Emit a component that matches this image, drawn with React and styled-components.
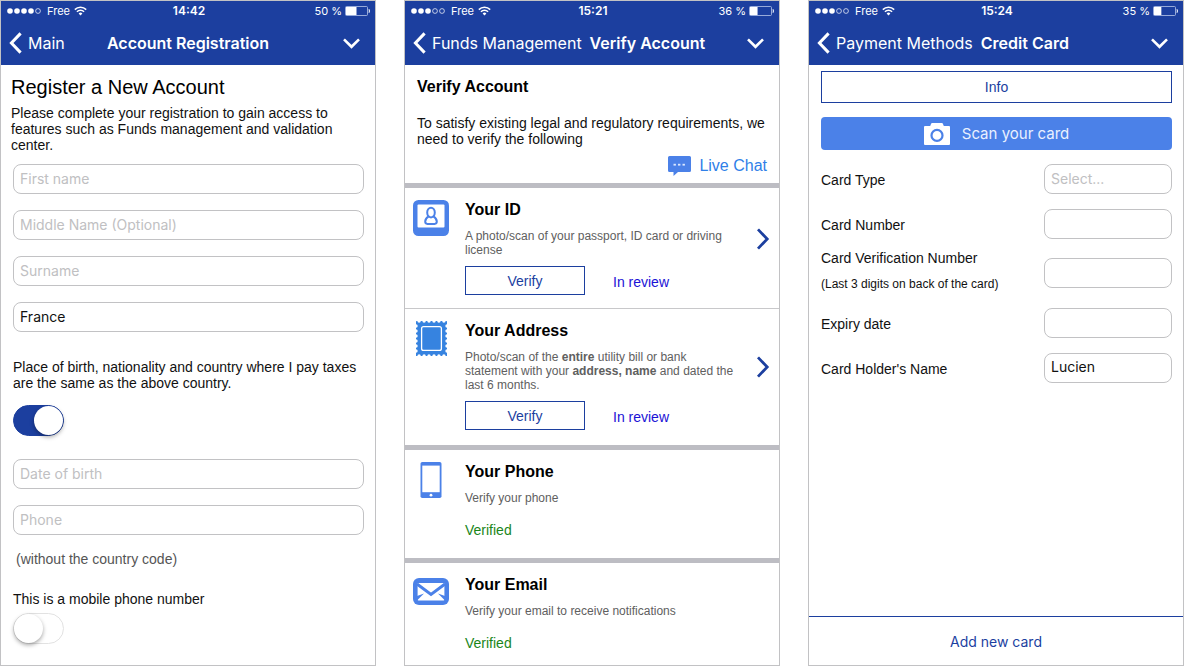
import React, { useState } from "react";
import styled, { createGlobalStyle } from "styled-components";

const navy = "#1c3f9f";
const blue = "#4b81e8";
const line = "#c2c2c4";
const ui = `Inter, "Liberation Sans", sans-serif`;
const body = `"Liberation Sans", Arial, sans-serif`;

const GlobalStyle = createGlobalStyle`
  *, *::before, *::after { box-sizing: border-box; }
  body { margin: 0; background: #fff; color: #111; font-family: ${body}; font-size: 14px; line-height: 16px; }
  h1, h2, p { margin: 0; }
  button, input, select { font: inherit; }
`;

const Page = styled.main`
  display: grid;
  grid-template-columns: repeat(3, minmax(0, 1fr));
  gap: 28px;
  min-height: 100vh;
  padding-bottom: 1px;
`;

const Phone = styled.section`
  display: flex;
  flex-direction: column;
  border: 1px solid ${line};
`;

const Header = styled.header`
  background: ${navy};
  color: #fff;
  font-family: ${ui};
`;

const StatusBar = styled.div`
  display: grid;
  grid-template-columns: 1fr auto 1fr;
  align-items: center;
  height: 20px;
  padding: 0 4px 0 6px;
  font-size: 11px;
`;

const Carrier = styled.div`
  display: flex;
  align-items: center;
  gap: 4px;
`;

const Clock = styled.span`
  font-size: 12px;
  font-weight: 600;
`;

const Power = styled.div`
  display: flex;
  align-items: center;
  justify-content: flex-end;
  gap: 3px;
`;

const NavBar = styled.div`
  display: grid;
  grid-template-columns: 1fr auto 1fr;
  column-gap: 8px;
  align-items: center;
  height: 44px;
  font-size: 16px;
  white-space: nowrap;
`;

const Back = styled.button`
  display: flex;
  align-items: center;
  gap: 6px;
  padding: 0 0 0 8px;
  border: 0;
  background: none;
  color: inherit;
`;

const ScreenTitle = styled.span`
  font-weight: 600;
`;

const MenuToggle = styled.button`
  display: flex;
  justify-self: end;
  padding: 0 15px 0 0;
  border: 0;
  background: none;
  color: inherit;
`;

const Intro = styled.div`
  padding: 10px 10px 0;
`;

const Heading = styled.h1`
  font-size: 20px;
  font-weight: 400;
  line-height: 24px;
  margin-bottom: 6px;
  color: #000;
`;

const Form = styled.form`
  display: flex;
  flex-direction: column;
  padding: 11px 11px 20px 12px;
`;

const FieldGroup = styled.div`
  display: flex;
  flex-direction: column;
  gap: 16px;
`;

const fieldStyle = `
  width: 100%;
  height: 30px;
  padding: 0 6px;
  border: 1px solid ${line};
  border-radius: 8px;
  background: #fff;
  color: #111;
  font-family: ${ui};
  font-size: 14px;
  appearance: none;
  outline: none;
`;

const Field = styled.input`
  ${fieldStyle}
  padding-bottom: 2px;
  &::placeholder { color: #c0c0c2; opacity: 1; }
`;

const Picker = styled.select`
  ${fieldStyle}
  ${(p) => p.$empty && "color: #c0c0c2;"}
`;

const SwitchRow = styled.label`
  display: flex;
  flex-direction: column;
  align-items: flex-start;
  gap: ${(p) => p.$gap}px;
  margin: ${(p) => p.$margin};
`;

const Switch = styled.input`
  appearance: none;
  width: 51px;
  height: 31px;
  margin: 0;
  padding: 1px;
  border: 1px solid #e2e2e2;
  border-radius: 16px;
  background: #fff;
  &::before {
    content: "";
    display: block;
    width: 29px;
    height: 29px;
    margin-top: -1px;
    border-radius: 50%;
    background: #fff;
    box-shadow: 0 2px 4px rgba(0, 0, 0, 0.35);
  }
  &:not(:checked)::before { margin-left: -1px; }
  &:checked { background: ${navy}; border-color: ${navy}; }
  &:checked::before { margin-left: 19px; }
`;

const Hint = styled.p`
  margin: 16px 3px 24px;
  color: #555;
`;

const VerifyIntro = styled.div`
  display: flex;
  flex-direction: column;
  padding: 14px 12px 7px;
`;

const VerifyHeading = styled.h1`
  font-size: 16px;
  line-height: 16px;
  margin-bottom: 20px;
  color: #000;
`;

const Chat = styled.a`
  display: flex;
  align-items: center;
  align-self: flex-end;
  gap: 8px;
  margin-top: 9px;
  font-size: 16px;
  line-height: 20px;
  color: #2f80e8;
  text-decoration: none;
`;

const Step = styled.article`
  display: grid;
  grid-template-columns: 36px 1fr 14px;
  column-gap: 16px;
  padding: 12px 9px 15px 8px;
  border-top: ${(p) => (p.$joined ? "1px solid #c8c8ca" : "5px solid #bdbdc3")};
  &:has(+ [data-joined]) { padding-bottom: 13px; }
  &:last-child { padding-bottom: 8px; }
`;

const StepIcon = styled.div`
  display: flex;
  justify-content: center;
  align-items: flex-start;
`;

const StepTitle = styled.h2`
  font-size: 16px;
  line-height: 20px;
  color: #000;
`;

const StepText = styled.p`
  margin: 9px 0;
  font-size: 12px;
  line-height: 14px;
  color: #606060;
`;

const Actions = styled.div`
  display: flex;
  align-items: center;
  gap: 28px;
`;

const OutlineButton = styled.button`
  width: ${(p) => p.$width};
  height: ${(p) => p.$height}px;
  padding: 0;
  border: 1px solid ${navy};
  background: #fff;
  color: ${navy};
`;

const Status = styled.span`
  padding-top: 2px;
  color: #1a12d6;
`;

const Verified = styled.p`
  margin-top: 15px;
  padding-bottom: 3px;
  line-height: 20px;
  color: #1a861a;
`;

const Open = styled.button`
  display: flex;
  align-items: center;
  align-self: center;
  padding: 0 0 18px;
  border: 0;
  background: none;
`;

const CardForm = styled.form`
  display: flex;
  flex-direction: column;
  flex: 1;
`;

const CardBody = styled.div`
  display: flex;
  flex-direction: column;
  padding: 6px 11px 20px 12px;
`;

const ScanButton = styled.button`
  display: flex;
  align-items: center;
  justify-content: center;
  gap: 12px;
  height: 33px;
  margin: 14px 0 6px;
  border: 0;
  border-radius: 4px;
  background: ${blue};
  color: #e9f0ff;
  font-family: ${ui};
  font-size: 15px;
`;

const CardRow = styled.div`
  display: grid;
  grid-template-columns: 1fr 128px;
  align-items: center;
  min-height: ${(p) => (p.$tall ? 54 : 45)}px;
`;

const CardLabel = styled.label`
  display: flex;
  flex-direction: column;
  gap: 10px;
  padding: ${(p) => (p.$tall ? "0 0 5px" : "2px 0 0")};
`;

const Note = styled.span`
  font-size: 12px;
`;

const AddButton = styled.button`
  height: 49px;
  margin-top: auto;
  padding: 2px 0 0;
  border: 0;
  border-top: 1px solid ${navy};
  background: #fff;
  color: ${navy};
  font-family: ${ui};
  font-size: 14px;
`;

function Signal({ bars }) {
  return (
    <svg width="36" height="8" viewBox="0 0 36 8" aria-hidden="true">
      {[0, 1, 2, 3, 4].map((i) => (
        <circle key={i} cx={3 + i * 7} cy="4" r={i < bars ? 2.8 : 2.4}
          fill={i < bars ? "#fff" : "none"} stroke="#fff" strokeWidth={i < bars ? 0 : 0.7} />
      ))}
    </svg>
  );
}

function Wifi() {
  return (
    <svg width="13" height="10" viewBox="0 0 13 10" fill="none" stroke="#fff" strokeWidth="1.5" aria-hidden="true">
      <path d="M0.8 3.6C4 0.4 9 0.4 12.2 3.6" />
      <path d="M2.9 5.8C5 3.8 8 3.8 10.1 5.8" />
      <path d="M4.6 7.4Q6.5 5.8 8.4 7.4L6.5 9.5Z" fill="#fff" stroke="none" />
    </svg>
  );
}

function Battery({ level }) {
  return (
    <svg width="26" height="10" viewBox="0 0 26 10" aria-hidden="true">
      <rect x="0.5" y="0.5" width="22" height="9" rx="1" fill="none" stroke="#b9c6ea" strokeWidth="0.8" />
      <rect x="1" y="1" width={level * 0.21} height="8" fill="#fff" />
      <path d="M24 3.2Q25.4 5 24 6.8Z" fill="#fff" stroke="#fff" strokeWidth="0.5" />
    </svg>
  );
}

function TopBar({ bars, time, level, back, title }) {
  return (
    <Header>
      <StatusBar>
        <Carrier><Signal bars={bars} /><span>Free</span><Wifi /></Carrier>
        <Clock>{time}</Clock>
        <Power><span>{level} %</span><Battery level={level} /></Power>
      </StatusBar>
      <NavBar>
        <Back type="button">
          <svg width="13" height="22" viewBox="0 0 13 22" fill="none" stroke="#fff" strokeWidth="3" aria-hidden="true">
            <path d="M11.6 1.4L2.4 11L11.6 20.6" />
          </svg>
          {back}
        </Back>
        <ScreenTitle>{title}</ScreenTitle>
        <MenuToggle type="button" aria-label="Open menu">
          <svg width="17" height="11" viewBox="0 0 17 11" fill="none" stroke="#fff" strokeWidth="2.6" aria-hidden="true">
            <path d="M1 1.4L8.5 8.8L16 1.4" />
          </svg>
        </MenuToggle>
      </NavBar>
    </Header>
  );
}

function Chevron() {
  return (
    <svg width="14" height="22" viewBox="0 0 14 22" fill="none" stroke={navy} strokeWidth="2.8" aria-hidden="true">
      <path d="M2 1.4L11.2 11L2 20.6" />
    </svg>
  );
}

function ChatIcon() {
  return (
    <svg width="23" height="20" viewBox="0 0 23 20" aria-hidden="true">
      <path d="M1.5 0H21.5Q23 0 23 1.5V14.5Q23 16 21.5 16H10L5.5 20V16H1.5Q0 16 0 14.5V1.5Q0 0 1.5 0Z" fill={blue} />
      <g fill="#dce8ff"><rect x="5.5" y="7.8" width="2.4" height="1.8" /><rect x="10" y="7.8" width="2.4" height="1.8" /><rect x="14.5" y="7.8" width="2.4" height="1.8" /></g>
    </svg>
  );
}

function IdIcon() {
  return (
    <svg width="36" height="36" viewBox="0 0 36 36" aria-hidden="true">
      <rect width="36" height="36" rx="5.5" fill={blue} />
      <rect x="4.5" y="4.5" width="27" height="23" rx="1" fill="#fff" />
      <ellipse cx="18" cy="12.6" rx="3.8" ry="4.8" fill="none" stroke={blue} strokeWidth="2" />
      <path d="M15.6 16.4C13.4 17.8 12.2 19.2 12.2 21.6Q12.2 23.9 14.4 23.9H21.6Q23.8 23.9 23.8 21.6C23.8 19.2 22.6 17.8 20.4 16.4" fill="none" stroke={blue} strokeWidth="2" />
    </svg>
  );
}

function StampIcon() {
  const across = [3.1, 8.1, 13, 18, 22.9, 27.9];
  const down = [5, 10, 15, 20, 25, 30];
  return (
    <svg width="31" height="35" viewBox="0 0 31 35" aria-hidden="true">
      <rect width="31" height="35" rx="0.6" fill="#3683e0" />
      <g fill="#fff">
        {across.map((x) => <React.Fragment key={x}><circle cx={x} cy="0" r="1.7" /><circle cx={x} cy="35" r="1.7" /></React.Fragment>)}
        {down.map((y) => <React.Fragment key={y}><circle cx="0" cy={y} r="1.7" /><circle cx="31" cy={y} r="1.7" /></React.Fragment>)}
      </g>
      <rect x="5.6" y="5.6" width="19.8" height="23.8" rx="2" fill="none" stroke="#fff" strokeWidth="1.3" />
    </svg>
  );
}

function PhoneIcon() {
  return (
    <svg width="22" height="37" viewBox="0 0 22 37" aria-hidden="true">
      <rect x="0.5" y="0" width="21" height="36" rx="1.8" fill={blue} />
      <rect x="2.3" y="3.6" width="17.4" height="26.6" fill="#fff" />
      <circle cx="11" cy="33.2" r="1.4" fill="#fff" />
    </svg>
  );
}

function MailIcon() {
  return (
    <svg width="36" height="34" viewBox="0 -3 36 34" aria-hidden="true">
      <rect width="36" height="27" rx="6" fill={blue} />
      <rect x="4.6" y="5" width="26.8" height="17.6" rx="0.8" fill="#fff" />
      <path d="M4 6L18 16.4L32 6" fill="none" stroke={blue} strokeWidth="3" />
      <path d="M4 18L11 15.4L4 22.6Z" fill={blue} />
      <path d="M32 18L25 15.4L32 22.6Z" fill={blue} />
    </svg>
  );
}

function CameraIcon() {
  return (
    <svg width="26" height="22" viewBox="0 0 26 22" aria-hidden="true">
      <path d="M1 3H6.2L7.2 0.4Q7.4 0 8 0H18Q18.6 0 18.8 0.4L19.8 3H25Q26 3 26 4V21Q26 22 25 22H1Q0 22 0 21V4Q0 3 1 3Z" fill="#fff" />
      <circle cx="13" cy="12.4" r="5.5" fill="#fff" stroke={blue} strokeWidth="2.2" />
    </svg>
  );
}

function Registration() {
  const [sameCountry, setSameCountry] = useState(true);
  const [mobile, setMobile] = useState(false);
  return (
    <Phone>
      <TopBar bars={4} time="14:42" level={50} back="Main" title="Account Registration" />
      <Intro>
        <Heading>Register a New Account</Heading>
        <p>Please complete your registration to gain access to features such as Funds management and validation center.</p>
      </Intro>
      <Form>
        <FieldGroup>
          <Field aria-label="First name" placeholder="First name" />
          <Field aria-label="Middle name" placeholder="Middle Name (Optional)" />
          <Field aria-label="Surname" placeholder="Surname" />
          <Picker aria-label="Country" defaultValue="France"><option>France</option></Picker>
        </FieldGroup>
        <SwitchRow $gap={14} $margin="27px 0 23px">
          Place of birth, nationality and country where I pay taxes are the same as the above country.
          <Switch type="checkbox" checked={sameCountry} onChange={(e) => setSameCountry(e.target.checked)} />
        </SwitchRow>
        <FieldGroup>
          <Field aria-label="Date of birth" placeholder="Date of birth" />
          <Field aria-label="Phone" type="tel" placeholder="Phone" />
        </FieldGroup>
        <Hint>(without the country code)</Hint>
        <SwitchRow $gap={6} $margin="0">
          This is a mobile phone number
          <Switch type="checkbox" checked={mobile} onChange={(e) => setMobile(e.target.checked)} />
        </SwitchRow>
      </Form>
    </Phone>
  );
}

function VerifyStep({ icon, title, text, joined, verified }) {
  return (
    <Step $joined={joined} data-joined={joined}>
      <StepIcon>{icon}</StepIcon>
      <div>
        <StepTitle>{title}</StepTitle>
        <StepText>{text}</StepText>
        {verified ? (
          <Verified>Verified</Verified>
        ) : (
          <Actions>
            <OutlineButton type="button" $width="120px" $height={29}>Verify</OutlineButton>
            <Status>In review</Status>
          </Actions>
        )}
      </div>
      {!verified && <Open type="button" aria-label={`Open ${title}`}><Chevron /></Open>}
    </Step>
  );
}

function Verification() {
  return (
    <Phone>
      <TopBar bars={3} time="15:21" level={36} back="Funds Management" title="Verify Account" />
      <VerifyIntro>
        <VerifyHeading>Verify Account</VerifyHeading>
        <p>To satisfy existing legal and regulatory requirements, we need to verify the following</p>
        <Chat href="#chat"><ChatIcon />Live Chat</Chat>
      </VerifyIntro>
      <VerifyStep icon={<IdIcon />} title="Your ID" text="A photo/scan of your passport, ID card or driving license" />
      <VerifyStep joined icon={<StampIcon />} title="Your Address"
        text={<>Photo/scan of the <b>entire</b> utility bill or bank statement with your <b>address, name</b> and dated the last 6 months.</>} />
      <VerifyStep verified icon={<PhoneIcon />} title="Your Phone" text="Verify your phone" />
      <VerifyStep verified icon={<MailIcon />} title="Your Email" text="Verify your email to receive notifications" />
    </Phone>
  );
}

function CreditCard() {
  return (
    <Phone>
      <TopBar bars={3} time="15:24" level={35} back="Payment Methods" title="Credit Card" />
      <CardForm>
        <CardBody>
          <OutlineButton type="button" $width="100%" $height={32}>Info</OutlineButton>
          <ScanButton type="button"><CameraIcon />Scan your card</ScanButton>
          <CardRow>
            <CardLabel htmlFor="card-type">Card Type</CardLabel>
            <Picker id="card-type" $empty><option>Select...</option></Picker>
          </CardRow>
          <CardRow>
            <CardLabel htmlFor="card-number">Card Number</CardLabel>
            <Field id="card-number" />
          </CardRow>
          <CardRow $tall>
            <CardLabel htmlFor="card-cvn" $tall>
              <span>Card Verification Number</span>
              <Note>(Last 3 digits on back of the card)</Note>
            </CardLabel>
            <Field id="card-cvn" />
          </CardRow>
          <CardRow>
            <CardLabel htmlFor="card-expiry">Expiry date</CardLabel>
            <Field id="card-expiry" />
          </CardRow>
          <CardRow>
            <CardLabel htmlFor="card-holder">Card Holder's Name</CardLabel>
            <Field id="card-holder" defaultValue="Lucien" />
          </CardRow>
        </CardBody>
        <AddButton type="button">Add new card</AddButton>
      </CardForm>
    </Phone>
  );
}

export default function App() {
  return (
    <>
      <GlobalStyle />
      <Page>
        <Registration />
        <Verification />
        <CreditCard />
      </Page>
    </>
  );
}
